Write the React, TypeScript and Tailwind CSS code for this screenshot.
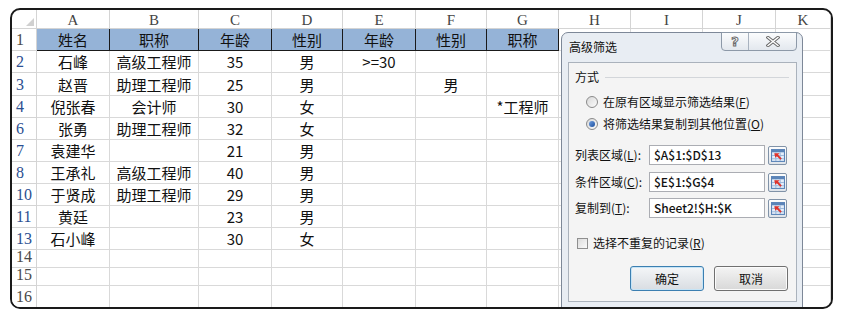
import React from 'react';

const COLS = ['A', 'B', 'C', 'D', 'E', 'F', 'G', 'H', 'I', 'J', 'K'];
const HEAD = ['姓名', '职称', '年龄', '性别', '年龄', '性别', '职称'];

const ROWS: { n: string; cells: string[]; blue: boolean }[] = [
  { n: '2', cells: ['石峰', '高级工程师', '35', '男', '>=30', '', ''], blue: true },
  { n: '3', cells: ['赵晋', '助理工程师', '25', '男', '', '男', ''], blue: true },
  { n: '4', cells: ['倪张春', '会计师', '30', '女', '', '', '*工程师'], blue: true },
  { n: '6', cells: ['张勇', '助理工程师', '32', '女', '', '', ''], blue: true },
  { n: '7', cells: ['袁建华', '', '21', '男', '', '', ''], blue: true },
  { n: '8', cells: ['王承礼', '高级工程师', '40', '男', '', '', ''], blue: true },
  { n: '10', cells: ['于贤成', '助理工程师', '29', '男', '', '', ''], blue: true },
  { n: '11', cells: ['黄廷', '', '23', '男', '', '', ''], blue: true },
  { n: '13', cells: ['石小峰', '', '30', '女', '', '', ''], blue: true },
  { n: '14', cells: [], blue: false },
  { n: '15', cells: [], blue: false },
  { n: '16', cells: [], blue: false },
];

const RowNum = ({ n, blue }: { n: string; blue?: boolean }) => (
  <div
    className={
      blue
        ? "flex items-end pl-[4px] pb-[1px] border-r border-b border-[#d4d4d4] bg-white font-['Liberation_Serif',serif] text-[16px] leading-[18px] text-[#2b4f91]"
        : "flex items-end pl-[4px] pb-[1px] border-r border-b border-[#d4d4d4] bg-white font-['Liberation_Serif',serif] text-[16px] leading-[18px] text-[#4a4a4a]"
    }
  >
    {n}
  </div>
);

const Cell = ({ text }: { text?: string }) => (
  <div className="flex items-center justify-center pt-[2px] border-r border-b border-[#d9d9d9] text-[15px] text-[#111] whitespace-nowrap">
    {text}
  </div>
);

const Sheet = () => (
  <div className="grid grid-cols-[25px_73px_89px_73px_71px_73px_71px_72px_72px_72px_73px_55px] grid-rows-[19px_22px_22px_23px_22px_22px_22px_22px_22px_22px_22px_18px_18px_22px] font-['Noto_Sans_CJK_SC',sans-serif]">
    <div className="flex items-end justify-end pr-[2px] pb-[2px] border-r border-b border-[#d4d4d4]">
      <svg width="8" height="8" viewBox="0 0 8 8">
        <polygon points="8,0 8,8 0,8" fill="#d0d0d0" />
      </svg>
    </div>
    {COLS.map(c => (
      <div
        key={c}
        className="flex items-center justify-center pt-[2px] border-r border-b border-[#d4d4d4] font-['Liberation_Serif',serif] text-[15px] text-[#444]"
      >
        {c}
      </div>
    ))}

    <RowNum n="1" />
    {HEAD.map((h, i) => (
      <div
        key={i}
        className="flex items-center justify-center pt-[2px] bg-[#95b3d7] border-r border-b border-[#1a1a1a] text-[15px] text-[#111]"
      >
        {h}
      </div>
    ))}
    {[0, 1, 2, 3].map(i => (
      <Cell key={'h' + i} />
    ))}

    {ROWS.map(r => (
      <React.Fragment key={r.n}>
        <RowNum n={r.n} blue={r.blue} />
        {COLS.map((c, i) => (
          <Cell key={c} text={r.cells[i]} />
        ))}
      </React.Fragment>
    ))}
  </div>
);

const Radio = ({ checked }: { checked?: boolean }) => (
  <span className="flex items-center justify-center w-[12px] h-[12px] rounded-full border border-[#8a8a8a] bg-linear-to-br from-[#d8d8d8] to-[#fbfbfb]">
    {checked && (
      <span className="w-[6px] h-[6px] rounded-full bg-linear-to-br from-[#6f9fe0] to-[#1d4f9e]" />
    )}
  </span>
);

const RangeButton = () => (
  <span className="flex items-center justify-center w-[19px] h-[19px] ml-[3px] rounded-[2px] border border-[#8193a8] bg-linear-to-b from-[#fdfdfd] to-[#dfe4ea]">
    <svg width="14" height="13" viewBox="0 0 13 12">
      <rect x="0.5" y="0.5" width="12" height="11" fill="#e4eefa" stroke="#5b84b8" />
      <rect x="0.5" y="0.5" width="12" height="2.5" fill="#5b84b8" />
      <line x1="1" y1="6" x2="12" y2="6" stroke="#9db8da" />
      <line x1="1" y1="9" x2="12" y2="9" stroke="#9db8da" />
      <line x1="4.5" y1="3" x2="4.5" y2="11" stroke="#9db8da" />
      <line x1="8.5" y1="3" x2="8.5" y2="11" stroke="#9db8da" />
      <path d="M3 4 L8 4 L6.6 5.4 L10 8.8 L8.8 10 L5.4 6.6 L4 8 Z" fill="#e0322a" />
    </svg>
  </span>
);

const FieldRow = ({
  label,
  acc,
  value,
  className,
}: {
  label: string;
  acc: string;
  value: string;
  className: string;
}) => (
  <div className={className}>
    <span className="w-[74px]">
      {label}(<span className="underline">{acc}</span>):
    </span>
    <span className="flex items-center w-[116px] h-[20px] pl-[4px] bg-white border border-[#abadb3] font-medium text-[12px]">
      {value}
    </span>
    <RangeButton />
  </div>
);

const Dialog = () => (
  <div className="absolute left-[549px] top-[22px] w-[242px] h-[276px] rounded-t-[7px] border border-[#7d8898] bg-[#e8edf3] font-['Noto_Sans_CJK_SC',sans-serif] text-[12px] text-[#111]">
    <div className="flex items-center h-[29px] pl-[7px] pb-[2px]">高级筛选</div>
    <div className="absolute right-[5px] top-[-1px] flex h-[19px] rounded-b-[4px] border border-[#8d99a8] bg-linear-to-b from-[#fbfcfd] to-[#e3e8ee]">
      <span className="flex items-center justify-center w-[27px] border-r border-[#a8b2bf] font-['DejaVu_Sans',sans-serif] font-bold text-[13px] text-white [-webkit-text-stroke:1px_#6b6b6b]">
        ?
      </span>
      <span className="flex items-center justify-center w-[47px]">
        <svg width="14" height="11" viewBox="0 0 14 11">
          <path d="M2 1.5 L12 9.5 M12 1.5 L2 9.5" stroke="#6b6b6b" strokeWidth="3.4" strokeLinecap="square" />
          <path d="M2 1.5 L12 9.5 M12 1.5 L2 9.5" stroke="#ffffff" strokeWidth="1.4" strokeLinecap="square" />
        </svg>
      </span>
    </div>

    <div className="flex flex-col ml-[6px] w-[229px] h-[240px] border border-[#aab2bc] bg-[#f4f4f4] pl-[6px]">
      <div className="flex items-center h-[18px] mt-[5px] gap-[6px]">
        <span>方式</span>
        <span className="flex-1 mr-[7px] border-t border-[#d3d6da]" />
      </div>
      <div className="flex items-center h-[22px] mt-[5px] ml-[11px] gap-[5px]">
        <Radio />
        <span>
          在原有区域显示筛选结果(<span className="underline">F</span>)
        </span>
      </div>
      <div className="flex items-center h-[22px] ml-[11px] gap-[5px]">
        <Radio checked />
        <span>
          将筛选结果复制到其他位置(<span className="underline">O</span>)
        </span>
      </div>
      <FieldRow
        className="flex items-center h-[20px] mt-[10px]"
        label="列表区域"
        acc="L"
        value="$A$1:$D$13"
      />
      <FieldRow
        className="flex items-center h-[20px] mt-[7px]"
        label="条件区域"
        acc="C"
        value="$E$1:$G$4"
      />
      <FieldRow
        className="flex items-center h-[20px] mt-[6px]"
        label="复制到"
        acc="T"
        value="Sheet2!$H:$K"
      />
      <div className="flex items-center h-[18px] mt-[16px] ml-[2px] gap-[5px]">
        <span className="w-[11px] h-[11px] border border-[#8f8f8f] bg-linear-to-br from-[#dcdcdc] to-[#fafafa]" />
        <span>
          选择不重复的记录(<span className="underline">R</span>)
        </span>
      </div>
      <div className="flex justify-end gap-[10px] mt-[14px] pr-[8px]">
        <button className="w-[74px] h-[25px] rounded-[3px] border border-[#3c7fb1] bg-linear-to-b from-[#f4f6f8] to-[#d9dde2] shadow-[inset_0_0_0_1px_#c6e4f6]">
          确定
        </button>
        <button className="w-[74px] h-[25px] rounded-[3px] border border-[#707070] bg-linear-to-b from-[#f4f4f4] to-[#d8d8d8] shadow-[inset_0_0_0_1px_#fbfbfb]">
          取消
        </button>
      </div>
    </div>
  </div>
);

export default function App() {
  return (
    <div className="w-[845px] h-[318px] bg-white pt-[8px] pl-[10px]">
      <div className="relative w-[823px] h-[301px] border-2 border-[#1a1a1a] rounded-[10px] overflow-hidden bg-white">
        <Sheet />
        <Dialog />
      </div>
    </div>
  );
}
